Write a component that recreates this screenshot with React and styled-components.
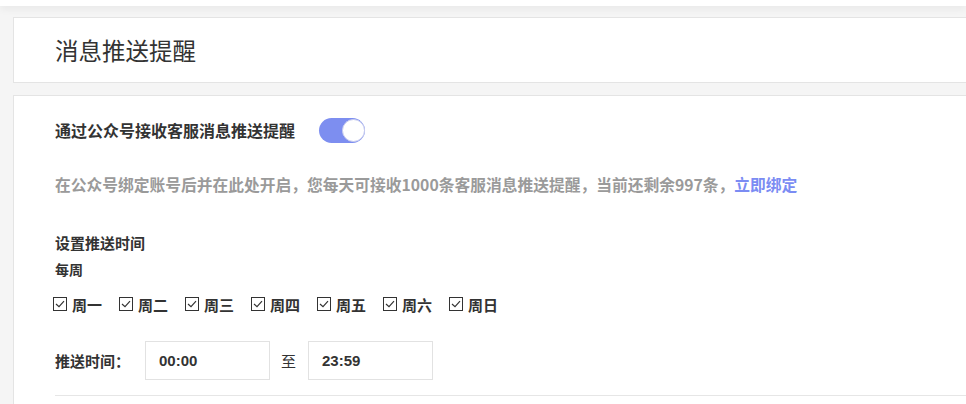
import React, { useState } from 'react';
import styled, { createGlobalStyle } from 'styled-components';

const GlobalStyle = createGlobalStyle`
  html, body {
    margin: 0;
    padding: 0;
    background: #f5f5f5;
    overflow: hidden;
  }
  body {
    font-family: "Noto Sans CJK SC", "Liberation Sans", sans-serif;
    color: #333;
  }
`;

const Page = styled.div`
  width: 966px;
  height: 404px;
  overflow: hidden;
  background: #f5f5f5;
`;

const TopBar = styled.div`
  height: 6px;
  background: #fff;
  box-shadow: 0 2px 8px rgba(0, 0, 0, 0.08);
`;

const Content = styled.div`
  padding: 11px 0 0 13px;
  display: flex;
  flex-direction: column;
  gap: 12px;
  width: 1000px;
`;

const Card = styled.section`
  background: #fff;
  border: 1px solid #e4e4e4;
  padding: ${(p) => p.$pad || '0 41px'};
`;

const HeaderCard = styled(Card)`
  height: 64px;
  display: flex;
  align-items: center;
`;

const Title = styled.h1`
  margin: 0;
  font-size: 23.5px;
  font-weight: 400;
  color: #333;
`;

const Row = styled.div`
  display: flex;
  align-items: center;
  gap: ${(p) => p.$gap || '0'};
`;

const Label = styled.span`
  font-size: ${(p) => p.$size || '15px'};
  font-weight: 700;
  color: #333;
  line-height: 1.4;
`;

const Switch = styled.button`
  width: 46px;
  height: 25px;
  border-radius: 13px;
  border: none;
  padding: 0;
  background: ${(p) => (p.$on ? '#7d8ef0' : '#ccc')};
  display: flex;
  align-items: center;
  justify-content: ${(p) => (p.$on ? 'flex-end' : 'flex-start')};
  cursor: pointer;
`;

const Knob = styled.span`
  width: 23px;
  height: 23px;
  box-sizing: border-box;
  border-radius: 50%;
  background: #fff;
  border: 1px solid #c9cdee;
`;

const Hint = styled.p`
  margin: 0;
  font-size: 15.75px;
  font-weight: 700;
  color: #9a9a9a;
`;

const Link = styled.a`
  color: #7b8cf3;
  text-decoration: none;
  cursor: pointer;
`;

const Section = styled.div`
  display: flex;
  flex-direction: column;
`;

const Days = styled.div`
  display: flex;
  gap: 14px;
  margin-left: -2px;
`;

const Day = styled.label`
  display: flex;
  align-items: center;
  gap: 5px;
  font-size: 15px;
  font-weight: 700;
  color: #333;
  width: 52px;
`;

const Box = styled.span`
  width: 14px;
  height: 14px;
  box-sizing: border-box;
  border: 1px solid #333;
  display: flex;
  align-items: center;
  justify-content: center;
`;

const TimeInput = styled.div`
  width: 125px;
  height: 39px;
  box-sizing: border-box;
  border: 1px solid #e2e2e2;
  display: flex;
  align-items: center;
  padding-left: 13px;
  font-family: "Liberation Sans", sans-serif;
  font-size: 15px;
  font-weight: 700;
  color: #333;
`;

const Sep = styled.span`
  font-size: 15px;
  color: #333;
  margin: 0 12px 0 11px;
`;

const Divider = styled.hr`
  margin: 0 0 40px;
  border: none;
  border-top: 1px solid #e6e6e6;
`;

const days = ['周一', '周二', '周三', '周四', '周五', '周六', '周日'];

const Check = () => (
  <svg width="10" height="8" viewBox="0 0 10 8">
    <path d="M1 4 L4 6.6 L9 1.2" fill="none" stroke="#333" strokeWidth="1.2" />
  </svg>
);

export default function App() {
  const [on, setOn] = useState(true);
  return (
    <Page>
      <GlobalStyle />
      <TopBar />
      <Content>
        <HeaderCard>
          <Title>消息推送提醒</Title>
        </HeaderCard>
        <Card $pad="22px 41px 0">
          <Row $gap="24px">
            <Label $size="16px">通过公众号接收客服消息推送提醒</Label>
            <Switch $on={on} onClick={() => setOn(!on)}>
              <Knob />
            </Switch>
          </Row>
          <Section style={{ marginTop: 30 }}>
            <Hint>
              在公众号绑定账号后并在此处开启，您每天可接收1000条客服消息推送提醒，当前还剩余997条，
              <Link>立即绑定</Link>
            </Hint>
          </Section>
          <Section style={{ marginTop: 36, gap: 7 }}>
            <Label>设置推送时间</Label>
            <Label $size="14px">每周</Label>
          </Section>
          <Days style={{ marginTop: 14 }}>
            {days.map((d) => (
              <Day key={d}>
                <Box>
                  <Check />
                </Box>
                {d}
              </Day>
            ))}
          </Days>
          <Row style={{ marginTop: 26, marginBottom: 15 }}>
            <Label style={{ width: 90 }}>推送时间：</Label>
            <TimeInput>00:00</TimeInput>
            <Sep>至</Sep>
            <TimeInput>23:59</TimeInput>
          </Row>
          <Divider />
        </Card>
      </Content>
    </Page>
  );
}
